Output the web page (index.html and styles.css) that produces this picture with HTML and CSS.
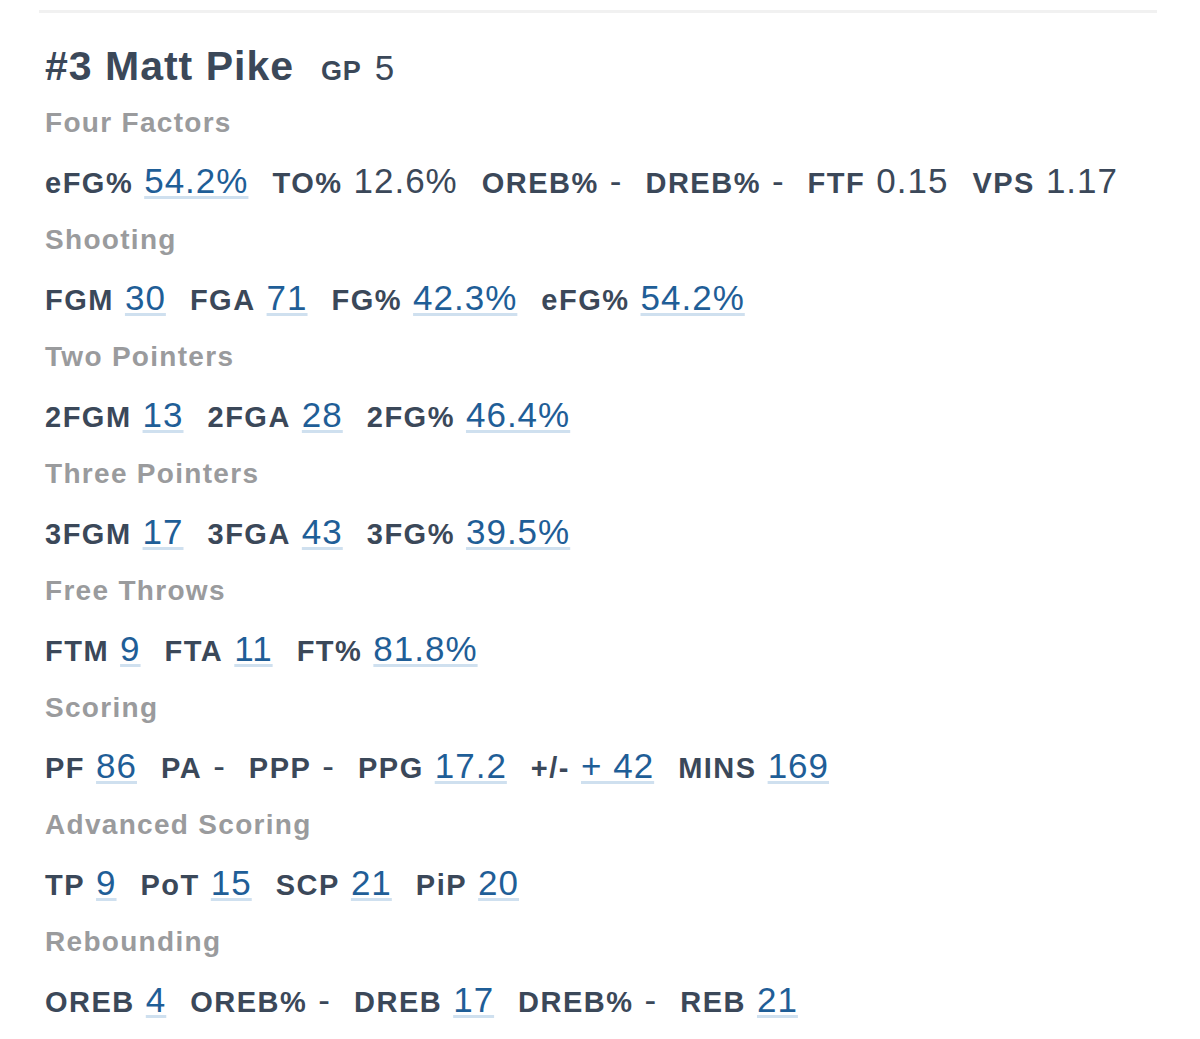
FILE: index.html
```html
<!DOCTYPE html>
<html>
<head>
<meta charset="utf-8">
<link rel="stylesheet" href="styles.css">
</head>
<body>
<div class="rule"></div>
<div class="card">
  <div class="head">
    <span class="name">#3 Matt Pike</span>
    <span class="lab">GP</span><span class="plain">5</span>
  </div>

  <div class="title">Four Factors</div>
  <div class="row">
    <span class="stat"><span class="lab">eFG%</span><span class="val">54.2%</span></span>
    <span class="stat"><span class="lab">TO%</span><span class="plain">12.6%</span></span>
    <span class="stat"><span class="lab">OREB%</span><span class="dash">-</span></span>
    <span class="stat"><span class="lab">DREB%</span><span class="dash">-</span></span>
    <span class="stat"><span class="lab">FTF</span><span class="plain">0.15</span></span>
    <span class="stat"><span class="lab">VPS</span><span class="plain">1.17</span></span>
  </div>

  <div class="title">Shooting</div>
  <div class="row">
    <span class="stat"><span class="lab">FGM</span><span class="val">30</span></span>
    <span class="stat"><span class="lab">FGA</span><span class="val">71</span></span>
    <span class="stat"><span class="lab">FG%</span><span class="val">42.3%</span></span>
    <span class="stat"><span class="lab">eFG%</span><span class="val">54.2%</span></span>
  </div>

  <div class="title">Two Pointers</div>
  <div class="row">
    <span class="stat"><span class="lab">2FGM</span><span class="val">13</span></span>
    <span class="stat"><span class="lab">2FGA</span><span class="val">28</span></span>
    <span class="stat"><span class="lab">2FG%</span><span class="val">46.4%</span></span>
  </div>

  <div class="title">Three Pointers</div>
  <div class="row">
    <span class="stat"><span class="lab">3FGM</span><span class="val">17</span></span>
    <span class="stat"><span class="lab">3FGA</span><span class="val">43</span></span>
    <span class="stat"><span class="lab">3FG%</span><span class="val">39.5%</span></span>
  </div>

  <div class="title">Free Throws</div>
  <div class="row">
    <span class="stat"><span class="lab">FTM</span><span class="val">9</span></span>
    <span class="stat"><span class="lab">FTA</span><span class="val">11</span></span>
    <span class="stat"><span class="lab">FT%</span><span class="val">81.8%</span></span>
  </div>

  <div class="title">Scoring</div>
  <div class="row">
    <span class="stat"><span class="lab">PF</span><span class="val">86</span></span>
    <span class="stat"><span class="lab">PA</span><span class="dash">-</span></span>
    <span class="stat"><span class="lab">PPP</span><span class="dash">-</span></span>
    <span class="stat"><span class="lab">PPG</span><span class="val">17.2</span></span>
    <span class="stat"><span class="lab">+/-</span><span class="val">+ 42</span></span>
    <span class="stat"><span class="lab">MINS</span><span class="val">169</span></span>
  </div>

  <div class="title">Advanced Scoring</div>
  <div class="row">
    <span class="stat"><span class="lab">TP</span><span class="val">9</span></span>
    <span class="stat"><span class="lab">PoT</span><span class="val">15</span></span>
    <span class="stat"><span class="lab">SCP</span><span class="val">21</span></span>
    <span class="stat"><span class="lab">PiP</span><span class="val">20</span></span>
  </div>

  <div class="title">Rebounding</div>
  <div class="row">
    <span class="stat"><span class="lab">OREB</span><span class="val">4</span></span>
    <span class="stat"><span class="lab">OREB%</span><span class="dash">-</span></span>
    <span class="stat"><span class="lab">DREB</span><span class="val">17</span></span>
    <span class="stat"><span class="lab">DREB%</span><span class="dash">-</span></span>
    <span class="stat"><span class="lab">REB</span><span class="val">21</span></span>
  </div>
</div>
</body>
</html>
```

FILE: styles.css
```css
html, body {
  margin: 0;
  padding: 0;
  background: #ffffff;
}
body {
  font-family: "Liberation Sans", Arial, sans-serif;
  color: #3b4859;
}
.rule {
  height: 3px;
  background: #f1f1f1;
  margin: 10px 43px 0 39px;
}
.card {
  padding: 0 40px 0 45px;
}
.head {
  display: flex;
  align-items: baseline;
  height: 44px;
  padding-top: 31px;
  margin-bottom: 10px;
  line-height: 44px;
}
.name {
  font-size: 41px;
  font-weight: 700;
  letter-spacing: 1px;
  margin-right: 27px;
}
.head .lab {
  font-size: 27px;
  letter-spacing: 0.8px;
  margin-right: 13px;
}
.head .plain {
  font-size: 35px;
}
.title {
  font-size: 28px;
  font-weight: 700;
  color: #9a9b9d;
  letter-spacing: 1.3px;
  line-height: 40px;
  height: 40px;
  padding-top: 5px;
}
.row {
  display: flex;
  align-items: baseline;
  column-gap: 24px;
  line-height: 44px;
  height: 44px;
  padding-top: 16px;
  padding-bottom: 12px;
}
.stat {
  display: flex;
  align-items: baseline;
}
.lab {
  font-size: 29px;
  font-weight: 700;
  letter-spacing: 1.5px;
  margin-right: 11px;
  color: #3b4859;
}
.val, .plain {
  font-size: 35px;
  letter-spacing: 1px;
}
.val {
  color: #1f5e97;
  text-decoration: underline;
  text-decoration-color: #cfe0ef;
  text-decoration-thickness: 3px;
  text-underline-offset: 3px;
}
.plain {
  color: #3b4859;
}
.dash {
  font-size: 35px;
  color: #3b4859;
  margin-left: 0;
}
```
